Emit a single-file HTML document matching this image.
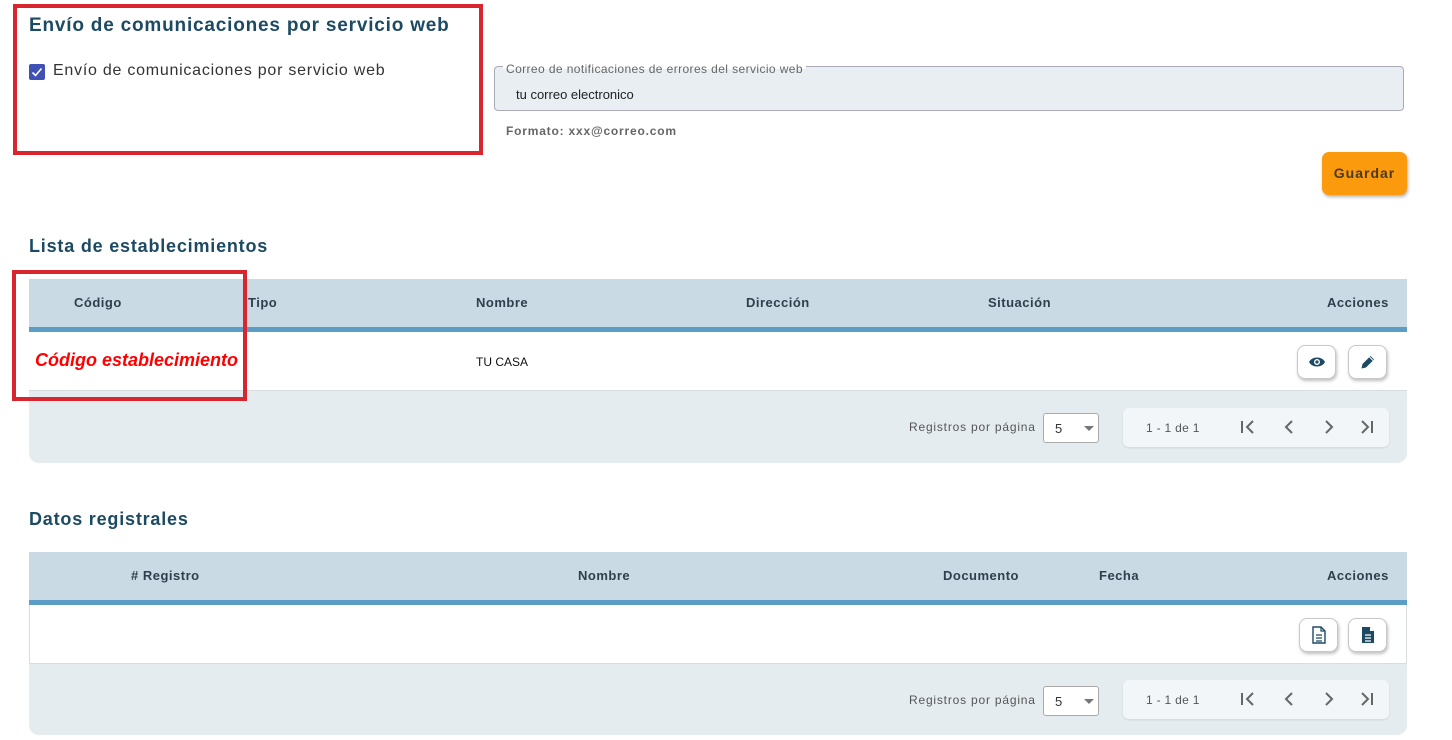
<!DOCTYPE html>
<html><head><meta charset="utf-8"><style>
*{box-sizing:border-box;margin:0;padding:0}
body{width:1452px;height:740px;background:#fff;font-family:"Liberation Sans",sans-serif;position:relative;overflow:hidden;color:#333}
.a{position:absolute;white-space:nowrap}
.h{color:#1d4a63;font-weight:bold;letter-spacing:.8px}
.th{font-size:13px;font-weight:bold;color:#2f3f4b;line-height:16px;letter-spacing:.5px}
.btn{position:absolute;width:39px;height:34px;background:#fff;border:1px solid #c8c8c8;border-radius:8px;box-shadow:1px 2px 3px rgba(0,0,0,.25);display:flex;align-items:center;justify-content:center}
.pg{position:absolute;height:39px;background:#f3f6f8;border-radius:6px;box-shadow:0 1px 2px rgba(0,0,0,.1)}
.sel{position:absolute;width:56px;height:30px;background:#fff;border:1px solid #aaa;border-radius:3px;font-size:13px}
.red{position:absolute;border:4px solid #d9262e}
</style></head><body>

<div class="a h" style="left:29px;top:15px;font-size:19px">Envío de comunicaciones por servicio web</div>
<div class="a" style="left:29px;top:64px;width:16px;height:16px;background:#3f51b5;border-radius:2px"><svg width="16" height="16"><path d="M3.5 8.5l3 3 6-7" stroke="#fff" stroke-width="1.6" fill="none"/></svg></div>
<div class="a" style="left:53px;top:62px;font-size:16px;color:#333;letter-spacing:.75px">Envío de comunicaciones por servicio web</div>
<div class="red" style="left:13px;top:4px;width:470px;height:151px"></div>

<div class="a" style="left:494px;top:66px;width:910px;height:45px;background:#e8eef2;border:1px solid #aab;border-radius:4px"></div>
<div class="a" style="left:503px;top:62px;padding:0 3px;font-size:12px;color:#666;background:linear-gradient(#fff 50%,#e8eef2 50%);letter-spacing:.4px">Correo de notificaciones de errores del servicio web</div>
<div class="a" style="left:516px;top:87px;font-size:13px;color:#222">tu correo electronico</div>
<div class="a" style="left:506px;top:124px;font-size:12px;font-weight:bold;color:#666;letter-spacing:.8px">Formato: xxx@correo.com</div>

<div class="a" style="left:1322px;top:152px;width:85px;height:43px;background:#fa9a0c;border-radius:7px;box-shadow:1px 2px 3px rgba(0,0,0,.3);font-size:14px;font-weight:bold;color:#4a3a20;text-align:center;line-height:43px;letter-spacing:1px">Guardar</div>

<div class="a h" style="left:29px;top:236px;font-size:18px">Lista de establecimientos</div>
<div class="a" style="left:29px;top:279px;width:1378px;height:184px;background:#e5ecf0;border-radius:0 0 10px 10px;border-top-right-radius:4px"></div>
<div class="a" style="left:29px;top:279px;width:1378px;height:48px;background:#c9dae5"></div>
<div class="a" style="left:29px;top:327px;width:1378px;height:5px;background:#5b9dc4"></div>
<div class="a" style="left:29px;top:332px;width:1378px;height:59px;background:#fff;border-bottom:1px solid #d8dde0"></div>
<div class="a th" style="left:74px;top:295px">Código</div>
<div class="a th" style="left:248px;top:295px">Tipo</div>
<div class="a th" style="left:476px;top:295px">Nombre</div>
<div class="a th" style="left:746px;top:295px">Dirección</div>
<div class="a th" style="left:988px;top:295px">Situación</div>
<div class="a th" style="left:1327px;top:295px">Acciones</div>
<div class="a" style="left:35px;top:350px;font-size:18px;font-weight:bold;font-style:italic;color:#f00">Código establecimiento</div>
<div class="a" style="left:476px;top:355px;font-size:12px;color:#111">TU CASA</div>
<div class="btn" style="left:1297px;top:345px"><svg width="18" height="12" viewBox="0 0 18 12"><path d="M1 6C4 0 14 0 17 6C14 12 4 12 1 6Z" fill="#1d4a63"/><circle cx="9" cy="6" r="3" fill="#fff"/><circle cx="9" cy="6" r="1.6" fill="#1d4a63"/></svg></div>
<div class="btn" style="left:1348px;top:345px"><svg width="16" height="16" viewBox="0 0 16 16"><path d="M1.5 14.5l1-4.5 8-8 3.5 3.5-8 8z" fill="#1d4a63"/><path d="M9.5 3l3.5 3.5" stroke="#fff" stroke-width="1"/></svg></div>
<div class="red" style="left:12px;top:270px;width:235px;height:131px"></div>

<div class="a" style="left:909px;top:420px;font-size:12px;color:#555;letter-spacing:.8px">Registros por página</div>
<div class="sel" style="left:1043px;top:413px"><span class="a" style="left:11px;top:7px">5</span><span class="a" style="left:40px;top:12px;border:5px solid transparent;border-top:5px solid #777;border-bottom:0"></span></div>
<div class="pg" style="left:1123px;top:408px;width:266px"><span class="a" style="left:23px;top:13px;font-size:12px;color:#555;letter-spacing:.3px">1 - 1 de 1</span>
<svg class="a" style="left:115px;top:10px" width="140" height="18" viewBox="0 0 140 18"><g stroke="#666" stroke-width="2" fill="none"><path d="M4 3v12M15 3l-6 6 6 6"/><path d="M54 3l-6 6 6 6"/><path d="M88 3l6 6-6 6"/><path d="M124 3l6 6-6 6M134 3v12"/></g></svg></div>

<div class="a h" style="left:29px;top:509px;font-size:18px">Datos registrales</div>
<div class="a" style="left:29px;top:552px;width:1378px;height:183px;background:#e5ecf0;border-radius:0 0 10px 10px"></div>
<div class="a" style="left:29px;top:552px;width:1378px;height:48px;background:#c9dae5"></div>
<div class="a" style="left:29px;top:600px;width:1378px;height:5px;background:#5b9dc4"></div>
<div class="a" style="left:29px;top:605px;width:1378px;height:59px;background:#fff;border:1px solid #d8dde0;border-top:0"></div>
<div class="a th" style="left:131px;top:568px"># Registro</div>
<div class="a th" style="left:578px;top:568px">Nombre</div>
<div class="a th" style="left:943px;top:568px">Documento</div>
<div class="a th" style="left:1099px;top:568px">Fecha</div>
<div class="a th" style="left:1327px;top:568px">Acciones</div>
<div class="btn" style="left:1299px;top:618px"><svg width="14" height="18" viewBox="0 0 14 18"><path d="M1 1h8l4 4v12H1z" fill="none" stroke="#1d4a63" stroke-width="1.4"/><path d="M9 1v4h4M4 9h6M4 12h6M4 15h6" stroke="#1d4a63" stroke-width="1.2" fill="none"/></svg></div>
<div class="btn" style="left:1348px;top:618px"><svg width="14" height="18" viewBox="0 0 14 18"><path d="M1 1h8l4 4v12H1z" fill="#1d4a63"/><path d="M9 1v4h4" fill="#fff"/><path d="M4 9h6M4 12h6M4 15h6" stroke="#fff" stroke-width="1.2"/></svg></div>

<div class="a" style="left:909px;top:693px;font-size:12px;color:#555;letter-spacing:.8px">Registros por página</div>
<div class="sel" style="left:1043px;top:686px"><span class="a" style="left:11px;top:7px">5</span><span class="a" style="left:40px;top:12px;border:5px solid transparent;border-top:5px solid #777;border-bottom:0"></span></div>
<div class="pg" style="left:1123px;top:680px;width:266px"><span class="a" style="left:23px;top:13px;font-size:12px;color:#555;letter-spacing:.3px">1 - 1 de 1</span>
<svg class="a" style="left:115px;top:10px" width="140" height="18" viewBox="0 0 140 18"><g stroke="#666" stroke-width="2" fill="none"><path d="M4 3v12M15 3l-6 6 6 6"/><path d="M54 3l-6 6 6 6"/><path d="M88 3l6 6-6 6"/><path d="M124 3l6 6-6 6M134 3v12"/></g></svg></div>
</body></html>
